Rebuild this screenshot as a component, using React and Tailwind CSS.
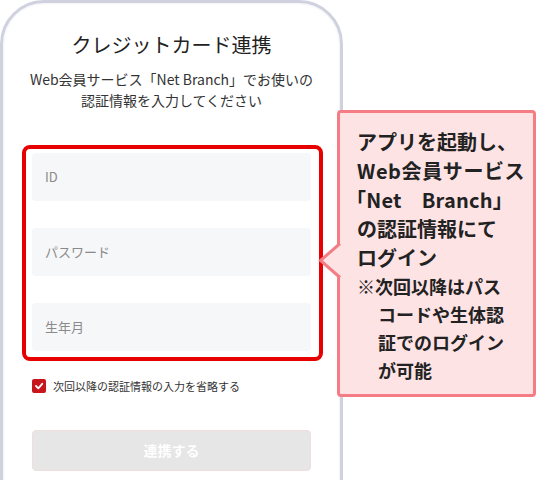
const fields = ["ID", "パスワード", "生年月"];

const Field = ({ label }) => (
    <div className="h-[48px] w-[279px] rounded-[4px] bg-[#f6f7f9] flex items-center pl-[13px] text-[13px] text-[#8a8a8a]">
        {label}
    </div>
);

const noteLines = ["※次回以降はパス", "コードや生体認", "証でのログイン", "が可能"];

const Bubble = () => (
    <div className="absolute left-[337px] top-[110px] w-[199px] h-[287px] rounded-[4px] border-[3px] border-[#f47d85] bg-[#fee3e5] pl-[17px] pt-[14px] text-[#222] font-semibold">
        <svg className="absolute left-[-22px] top-[130px]" width="26" height="38" viewBox="0 0 26 38">
            <polygon points="23,0 3,17.5 23,35" fill="#fee3e5" />
            <polyline points="22,0.5 2.5,17.5 22,34.5" fill="none" stroke="#f47d85" strokeWidth="3" strokeLinejoin="miter" />
        </svg>
        <div className="text-[20px] leading-[29px] whitespace-nowrap">
            <p>アプリを起動し、</p>
            <p className="tracking-[0.6px]">Web会員サービス</p>
            <p className="tracking-[0.2px] ml-[-11px]">「Net　Branch」</p>
            <p>の認証情報にて</p>
            <p>ログイン</p>
        </div>
        <div className="text-[18px] leading-[28px] whitespace-nowrap">
            {noteLines.map((line, i) => (
                <p key={line} className={i === 0 ? "" : "pl-[21px]"}>
                    {line}
                </p>
            ))}
        </div>
    </div>
);

const App = () => {
    return (
        <div
            className="relative w-[536px] h-[480px] overflow-hidden bg-white"
            style={{ fontFamily: '"Noto Sans CJK JP", "Noto Sans", sans-serif' }}
        >
            <div className="w-[343px] h-[540px] rounded-t-[44px] border-[3px] border-[#cfd1df] shadow-[inset_0_0_3px_#e4e6ef] pt-[28px] flex flex-col items-center">
                <h1 className="text-[20px] leading-[28px] text-[#222]">クレジットカード連携</h1>
                <p className="mt-[10px] text-[14px] leading-[21px] text-[#333] text-center">
                    Web会員サービス「Net Branch」でお使いの
                    <br />
                    認証情報を入力してください
                </p>

                <div className="self-start ml-[19px] mt-[34px] w-[301px] rounded-[8px] border-[4px] border-[#e60000] pl-[6px] pt-[4px] pb-[6px] flex flex-col gap-[27px]">
                    {fields.map((f) => (
                        <Field key={f} label={f} />
                    ))}
                </div>

                <label className="self-start ml-[29px] mt-[17px] flex items-center gap-[7px] text-[11px] text-[#333]">
                    <span className="w-[14px] h-[14px] rounded-[2px] bg-[#c8161d] flex items-center justify-center">
                        <svg width="10" height="10" viewBox="0 0 10 10">
                            <polyline points="2,5 4.3,7.3 8.2,2.8" fill="none" stroke="white" strokeWidth="1.8" strokeLinecap="round" strokeLinejoin="round" />
                        </svg>
                    </span>
                    次回以降の認証情報の入力を省略する
                </label>

                <button className="self-start ml-[29px] mt-[35px] w-[279px] h-[41px] rounded-[4px] border border-[#eedede] bg-[#e6e6e6] text-white text-[14px] font-bold">
                    連携する
                </button>
            </div>
            <Bubble />
        </div>
    );
};

export default App;
